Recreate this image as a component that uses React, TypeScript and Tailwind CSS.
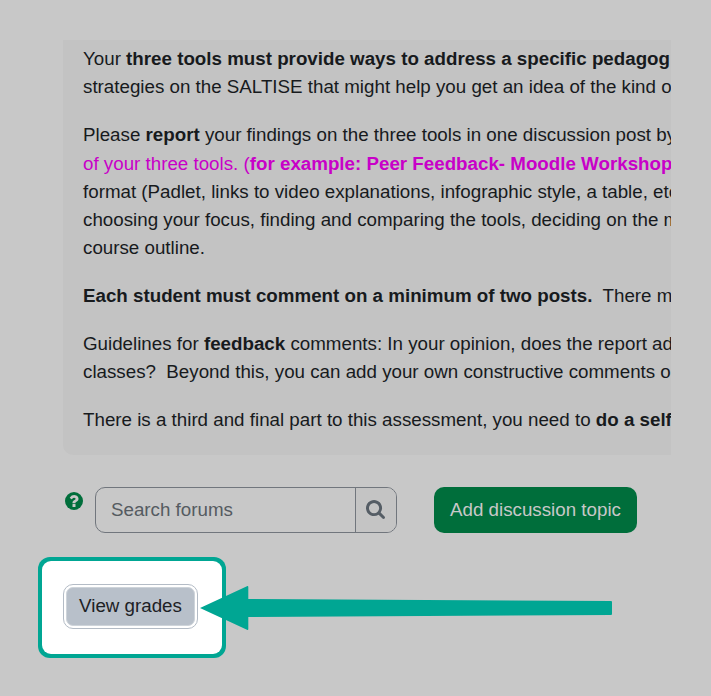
import React from "react";

function HelpIcon({ className }: { className: string }) {
  return (
    <svg className={className} viewBox="128 128 1536 1536">
      <circle cx="896" cy="896" r="768" fill="currentColor" />
      <path
        transform="translate(128 0)"
        fill="#c8c8c8"
        d="M896 1376v-192q0-14-9-23t-23-9h-192q-14 0-23 9t-9 23v192q0 14 9 23t23 9h192q14 0 23-9t9-23zm256-672q0-88-55.5-163t-138.5-116-170-41q-243 0-371 213-15 24 8 42l132 100q7 6 19 6 16 0 25-12 53-68 86-92 34-24 86-24 48 0 85.5 26t37.5 59q0 38-20 61t-68 45q-63 28-115.5 86.5t-52.5 125.5v36q0 14 9 23t23 9h192q14 0 23-9t9-23q0-19 21.5-49.5t54.5-49.5q32-18 49-28.5t46-35 44.5-48 28-60.5 12.5-81z"
      />
    </svg>
  );
}

function SearchIcon({ className }: { className: string }) {
  return (
    <svg className={className} viewBox="64 128 1664 1664" fill="currentColor">
      <path d="M1216 832q0-185-131.5-316.5t-316.5-131.5-316.5 131.5-131.5 316.5 131.5 316.5 316.5 131.5 316.5-131.5 131.5-316.5zm512 832q0 52-38 90t-90 38q-54 0-90-38l-343-342q-179 124-399 124-143 0-273.5-55.5t-225-150-150-225-55.5-273.5 55.5-273.5 150-225 225-150 273.5-55.5 273.5 55.5 225 150 150 225 55.5 273.5q0 220-124 399l343 343q37 37 37 90z" />
    </svg>
  );
}

function Para({ children }: { children: React.ReactNode }) {
  return <p className="mb-5 whitespace-pre">{children}</p>;
}

function Instructions() {
  return (
    <section className="ml-[63px] h-[415px] w-[608px] overflow-hidden rounded-bl-[10px] bg-[#c3c3c3] pl-5 pt-[5.15px]">
      <Para>
        Your <b>three tools must provide ways to address a specific pedagog</b>
        <br />
        strategies on the SALTISE that might help you get an idea of the kind o
      </Para>
      <Para>
        Please <b>report</b> your findings on the three tools in one discussion post by
        <br />
        <span className="text-[#c800c8]">
          of your three tools. (<b>for example: Peer Feedback- Moodle Workshop</b>
        </span>
        <br />
        format (Padlet, links to video explanations, infographic style, a table, etc
        <br />
        choosing your focus, finding and comparing the tools, deciding on the m
        <br />
        course outline.
      </Para>
      <Para>
        <b>Each student must comment on a minimum of two posts.</b>
        {"  There m"}
      </Para>
      <Para>
        Guidelines for <b>feedback</b> comments: In your opinion, does the report ad
        <br />
        {"classes?  Beyond this, you can add your own constructive comments o"}
      </Para>
      <Para>
        There is a third and final part to this assessment, you need to <b>do a self</b>
      </Para>
    </section>
  );
}

function SearchBar() {
  return (
    <div className="ml-[65px] mt-8 flex h-[46px]">
      <HelpIcon className="mt-[5px] size-[18px] text-[#006e3b]" />
      <div className="ml-3 flex w-[302px] overflow-hidden rounded-[10px] border border-[#71767d]">
        <input
          className="w-[259px] bg-transparent pl-[15px] text-[#555b61] outline-none placeholder:text-[#555b61]"
          placeholder="Search forums"
        />
        <button className="flex flex-1 items-center justify-center border-l border-[#71767d] bg-[#c4c4c4] pb-px pr-px">
          <SearchIcon className="size-[19px] text-[#555d65]" />
        </button>
      </div>
      <button className="ml-[37px] w-[203px] rounded-[10px] bg-[#006e3b] text-[#c8c8c8]">
        Add discussion topic
      </button>
    </div>
  );
}

export default function App() {
  return (
    <main className="relative h-[696px] w-[711px] overflow-hidden bg-[#c8c8c8] pt-10 font-['Liberation_Sans',Arial,sans-serif] text-[18.75px] leading-[28.125px] text-[#171a1d]">
      <Instructions />
      <SearchBar />
      <div className="ml-[38px] mt-6 h-[101px] w-[188px] rounded-[12px] bg-[#00a693] p-1">
        <div className="flex h-full items-start rounded-[9px] bg-white">
          <button className="ml-[21px] mt-[23px] h-[45px] w-[135px] rounded-[10px] border border-[#b4bcc6] bg-white p-[2px]">
            <span className="flex h-full items-center justify-center rounded-[7px] border border-[#ced4da] bg-[#b8c0ca] pb-px text-[#1d2125]">
              View grades
            </span>
          </button>
        </div>
      </div>
      <svg className="absolute left-[200px] top-[585px]" width="413" height="46" viewBox="0 0 413 46">
        <path d="M0 23 L47.5 1 Q48.3 .8 48.3 2 V14 L411 16 Q412 16 412 17 V29 Q412 30 411 30 L48.3 32 V44 Q48.3 45.2 47.5 45 Z" fill="#00a693" />
      </svg>
    </main>
  );
}
